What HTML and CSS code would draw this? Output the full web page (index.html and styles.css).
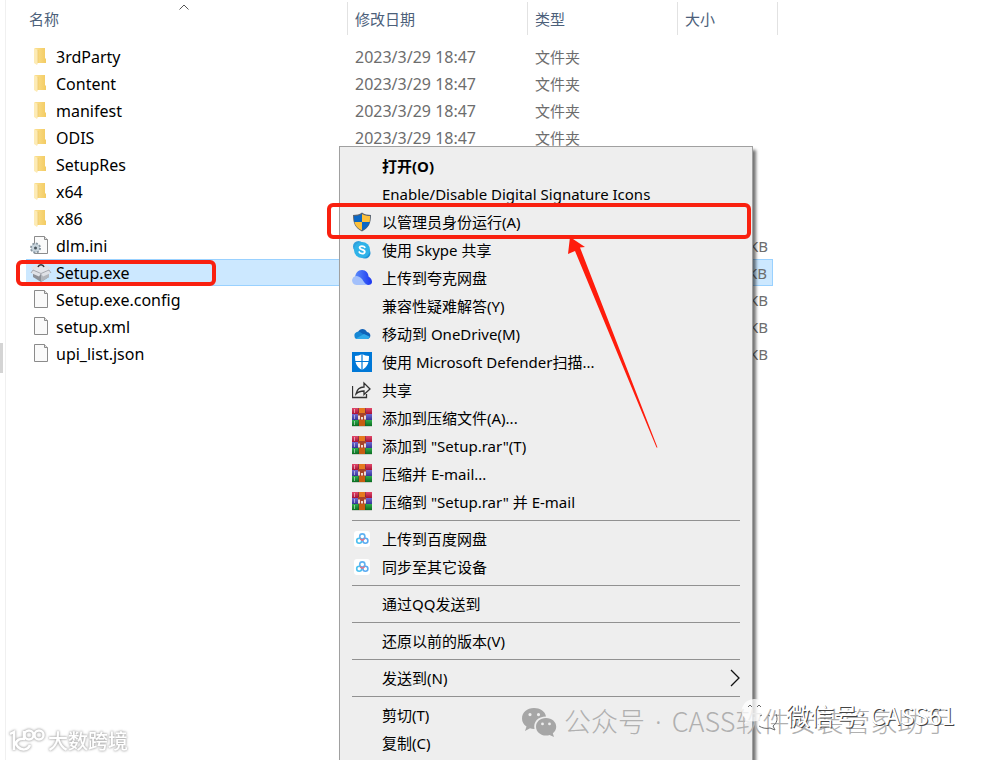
FILE: index.html
```html
<!DOCTYPE html>
<html lang="zh-CN">
<head>
<meta charset="utf-8">
<title>Setup</title>
<link rel="stylesheet" href="styles.css">
</head>
<body>
<svg class="defs" aria-hidden="true">
  <defs>
    <linearGradient id="fold" x1="0" x2="1"><stop offset="0" stop-color="#fbe08f"/><stop offset="1" stop-color="#f3cb62"/></linearGradient>
    <linearGradient id="cloud" x1="0" x2="1"><stop offset="0" stop-color="#5a8bfa"/><stop offset="1" stop-color="#1a35f0"/></linearGradient>
    <linearGradient id="red" x1="0" y1="0" x2="0" y2="1"><stop offset="0" stop-color="#e2486a"/><stop offset="1" stop-color="#a81238"/></linearGradient>
    <linearGradient id="blue" x1="0" y1="0" x2="0" y2="1"><stop offset="0" stop-color="#7069d0"/><stop offset="1" stop-color="#35359a"/></linearGradient>
    <linearGradient id="green" x1="0" y1="0" x2="0" y2="1"><stop offset="0" stop-color="#2fae4c"/><stop offset="1" stop-color="#0b6e22"/></linearGradient>
  </defs>
  <symbol id="folder" viewBox="0 0 22 22">
    <path d="M5 2h10v10l1 1v4H5z" fill="url(#fold)"/>
    <path d="M4 2l3 1.500 1 1v12.500l-1 2-3-2z" fill="#fdebb5"/>
    <path d="M8 4v13" stroke="#e9c467" stroke-width=".7"/>
  </symbol>
  <symbol id="file" viewBox="0 0 22 22">
    <path d="M4.500 1.500h10l3 3v14h-13z" fill="#fafafa" stroke="#8b8b8b"/>
    <path d="M14.500 1.500v3h3" fill="#e4e4e4" stroke="#8b8b8b"/>
  </symbol>
  <symbol id="ini" viewBox="0 0 22 22">
    <path d="M4.500 1.500h10l3 3v14h-13z" fill="#fafafa" stroke="#8b8b8b"/>
    <path d="M14.500 1.500v3h3" fill="#e4e4e4" stroke="#8b8b8b"/>
    <circle cx="5.500" cy="13" r="4.500" fill="#c3cfd8" stroke="#8997a1" stroke-width="2" stroke-dasharray="2 1.500"/>
    <circle cx="5.500" cy="13" r="3.500" fill="#c9d5dd"/>
    <circle cx="5.500" cy="13" r="1.500" fill="#49555e"/>
  </symbol>
  <symbol id="box" viewBox="0 0 22 22">
    <path d="M3 8l8 3 8-3v7l-8 5-8-5z" fill="#8d9097"/>
    <path d="M11 11l8-3v7l-8 5z" fill="#b2b5bb"/>
    <path d="M3 8l8-4 8 4-8 4z" fill="#e3e5ea"/>
    <path d="M3 8L1 5.500 8 2l3 2zM19 8l2-2.500L14 2l-3 2zM3 8l-2 3 8 3.500 2-3zM19 8l2 3-8 3.500-2-3z" fill="#dfe1e6"/>
    <path d="M1 11l2-3 8 3.500L19 8l2 3" fill="none" stroke="#9a9da5" stroke-width=".8"/>
    <path d="M8 5c1-3 5-3 6 0" fill="none" stroke="#343438" stroke-width="1.500"/>
  </symbol>
  <symbol id="shield" viewBox="0 0 20 20">
    <path d="M10 .5c2.500 1.800 5.500 2.500 9 2.500 0 8-2 13-9 16.500C3 16 1 11 1 3 4.500 3 7.500 2.300 10 .5z" fill="#5b6470"/>
    <path d="M10 2v8H2.400C2 8 2 6 2 4c3 0 5.500-.6 8-2z" fill="#0b67c4"/>
    <path d="M10 2v8h7.600c.4-2 .4-4 .4-6-3 0-5.500-.6-8-2z" fill="#fdc03a"/>
    <path d="M10 18.300V10H2.400c.8 4 3.600 6.800 7.600 8.300z" fill="#fdc03a"/>
    <path d="M10 18.300V10h7.600c-.8 4-3.600 6.800-7.600 8.300z" fill="#0b67c4"/>
  </symbol>
  <symbol id="skype" viewBox="0 0 20 20">
    <circle cx="6.500" cy="6.500" r="5.500" fill="#2f9fdc"/><circle cx="13" cy="13" r="5.500" fill="#1f92d6"/>
    <circle cx="10" cy="10" r="8" fill="#2fb2e8"/>
    <path d="M12.800 7.300c-.8-1.500-5.200-1.800-5.200.4 0 2.400 5.200 1.500 5.200 4.100 0 2.500-5 2.100-5.600.2" fill="none" stroke="#fff" stroke-width="1.800" stroke-linecap="round"/>
  </symbol>
  <symbol id="quark" viewBox="0 0 20 20">
    <path d="M3 11C3 5 6 2 10 2c4 0 6.500 3 6.500 6.500C19 10 20 12 20 14c0 2-1.500 3-4 3H5z" fill="url(#cloud)"/>
    <path d="M4.500 17a4.500 4.500 0 1 1 2.500-8.300c4 1.300 4.500 7 9 8.300z" fill="#a3c0fb"/>
  </symbol>
  <symbol id="onedrive" viewBox="0 0 20 20">
    <path d="M6 15a4 4 0 0 1 0-7c2-4 7-4 9 0 5 1 4 7 0 7z" fill="#0f62b8"/>
    <path d="M2.500 12C2 9 5 7 8 8l6 4-9 3c-1.500 0-2.500-1-2.500-3z" fill="#1787d4"/>
    <path d="M4 14.500L12 10l5.500 2.500c.4 1.500-1 2.500-2.500 2.500H6c-1 0-1.500 0-2-.5z" fill="#30a9ea"/>
  </symbol>
  <symbol id="defender" viewBox="0 0 20 20">
    <path d="M0 0h20v20H0z" fill="#0078d7"/>
    <path d="M10 2c2 1.300 4.300 2 7 2 0 7-1.500 11-7 14C4.500 15 3 11 3 4c2.700 0 5-.7 7-2z" fill="#fff"/>
    <path d="M10 2v16M3 9.500h14" stroke="#0078d7" stroke-width="1.200"/>
  </symbol>
  <symbol id="share" viewBox="0 0 20 20">
    <path d="M.5 6v11.500h14V14M4 14C5 9 7.500 7 12 7V3l6 6-6 5.500V11c-4 0-5.500.500-8 3z" fill="none" stroke="#333" stroke-width="1.300"/>
  </symbol>
  <symbol id="rar" viewBox="0 0 20 20">
    <path d="M0 0h20v6H0z" fill="url(#red)"/><path d="M0 6h20v6H0z" fill="url(#blue)"/><path d="M0 12h20v6H0z" fill="url(#green)"/>
    <path d="M0 18.500h20" stroke="#c9d0c9"/>
    <path d="M2.500 1v4M2.500 7v4M2.500 13v4" stroke="#fff" stroke-opacity=".5"/>
    <path d="M6.500 0v18M13.500 0v18" stroke="#333" stroke-opacity=".4"/>
    <path d="M7 0h6v18H7z" fill="#e67a1e"/>
    <path d="M7 12h6v6H7z" fill="#c85c12"/>
    <path d="M6 5h8v7H6z" fill="#a8432a"/>
    <path d="M7 11.500V7.500M13 11.500V7.500M10 11.500V9" stroke="#fff" stroke-width="1.600"/>
  </symbol>
  <symbol id="baidu" viewBox="0 0 20 20">
    <rect x="2" y="2" width="16" height="16" rx="3" fill="#fff"/>
    <g fill="none" stroke-width="1.600"><circle cx="10.300" cy="7.500" r="2.600" stroke="#5fb2f2"/><circle cx="7.200" cy="11.800" r="2.500" stroke="#4cc0f0"/><circle cx="13.400" cy="11.800" r="2.500" stroke="#5aabf2"/></g>
    <path d="M8 9.500l2.300 2 2.300-2" fill="none" stroke="#ee6e80" stroke-width="1.300"/>
  </symbol>
</svg>
<main class="explorer">
  <div class="scroll-thumb"></div>
  <table class="files">
    <colgroup><col class="c-name"><col class="c-date"><col class="c-type"><col class="c-size"><col class="c-gutter"></colgroup>
    <thead>
      <tr>
        <th class="name-head">名称<svg class="sort" viewBox="0 0 10 6" aria-hidden="true"><path d="M.5 5.500L5 1l4.500 4.500"/></svg></th>
        <th>修改日期</th><th>类型</th><th colspan="2">大小</th>
      </tr>
    </thead>
    <tbody>
      <tr><td><span class="file"><svg><use href="#folder"/></svg>3rdParty</span></td><td class="date">2023/3/29 18:47</td><td>文件夹</td><td></td></tr>
      <tr><td><span class="file"><svg><use href="#folder"/></svg>Content</span></td><td class="date">2023/3/29 18:47</td><td>文件夹</td><td></td></tr>
      <tr><td><span class="file"><svg><use href="#folder"/></svg>manifest</span></td><td class="date">2023/3/29 18:47</td><td>文件夹</td><td></td></tr>
      <tr><td><span class="file"><svg><use href="#folder"/></svg>ODIS</span></td><td class="date">2023/3/29 18:47</td><td>文件夹</td><td></td></tr>
      <tr><td><span class="file"><svg><use href="#folder"/></svg>SetupRes</span></td><td></td><td></td><td></td></tr>
      <tr><td><span class="file"><svg><use href="#folder"/></svg>x64</span></td><td></td><td></td><td></td></tr>
      <tr><td><span class="file"><svg><use href="#folder"/></svg>x86</span></td><td></td><td></td><td></td></tr>
      <tr><td><span class="file"><svg><use href="#ini"/></svg>dlm.ini</span></td><td></td><td></td><td class="size">KB</td></tr>
      <tr class="selected"><td><span class="file"><svg><use href="#box"/></svg>Setup.exe</span></td><td></td><td></td><td class="size">KB</td></tr>
      <tr><td><span class="file"><svg><use href="#file"/></svg>Setup.exe.config</span></td><td></td><td></td><td class="size">KB</td></tr>
      <tr><td><span class="file"><svg><use href="#file"/></svg>setup.xml</span></td><td></td><td></td><td class="size">KB</td></tr>
      <tr><td><span class="file"><svg><use href="#file"/></svg>upi_list.json</span></td><td></td><td></td><td class="size">KB</td></tr>
    </tbody>
  </table>

  <div class="menu" role="menu">
    <button class="item default" role="menuitem">打开(O)</button>
    <button class="item" role="menuitem">Enable/Disable Digital Signature Icons</button>
    <button class="item" role="menuitem"><svg><use href="#shield"/></svg>以管理员身份运行(A)</button>
    <button class="item" role="menuitem"><svg><use href="#skype"/></svg>使用 Skype 共享</button>
    <button class="item" role="menuitem"><svg><use href="#quark"/></svg>上传到夸克网盘</button>
    <button class="item" role="menuitem">兼容性疑难解答(Y)</button>
    <button class="item" role="menuitem"><svg><use href="#onedrive"/></svg>移动到 OneDrive(M)</button>
    <button class="item" role="menuitem"><svg><use href="#defender"/></svg>使用 Microsoft Defender扫描...</button>
    <button class="item" role="menuitem"><svg><use href="#share"/></svg>共享</button>
    <button class="item" role="menuitem"><svg><use href="#rar"/></svg>添加到压缩文件(A)...</button>
    <button class="item" role="menuitem"><svg><use href="#rar"/></svg>添加到 "Setup.rar"(T)</button>
    <button class="item" role="menuitem"><svg><use href="#rar"/></svg>压缩并 E-mail...</button>
    <button class="item" role="menuitem"><svg><use href="#rar"/></svg>压缩到 "Setup.rar" 并 E-mail</button>
    <hr>
    <button class="item" role="menuitem"><svg><use href="#baidu"/></svg>上传到百度网盘</button>
    <button class="item" role="menuitem"><svg><use href="#baidu"/></svg>同步至其它设备</button>
    <hr>
    <button class="item" role="menuitem">通过QQ发送到</button>
    <hr>
    <button class="item" role="menuitem">还原以前的版本(V)</button>
    <hr>
    <button class="item submenu" role="menuitem">发送到(N)<svg class="chevron" viewBox="0 0 10 18" aria-hidden="true"><path d="M1 1l8 8-8 8"/></svg></button>
    <hr>
    <button class="item" role="menuitem">剪切(T)</button>
    <button class="item" role="menuitem">复制(C)</button>
  </div>

  <div class="mark mark-file"></div>
  <div class="mark mark-run"></div>
  <svg class="arrow" viewBox="0 0 92 212" aria-hidden="true"><path d="M4 1l15 10-5 .500 77.500 200-1 0L9 15l-7 3z"/></svg>

  <div class="account">
    <svg viewBox="0 0 36 30" aria-hidden="true">
      <path fill-rule="evenodd" d="M13 1C6 1 1 5.500 1 11.500c0 3.500 1.700 6 4.500 8L4 24l5-2.700c1.500.4 3 .7 4.500.6C12 15 17 9.500 25 9.500 24 4 19 1 13 1zM9 6a1.600 1.600 0 1 1 0 3.200A1.600 1.600 0 0 1 9 6zm8.500 0a1.600 1.600 0 1 1 0 3.200 1.600 1.600 0 0 1 0-3.200z"/>
      <path fill-rule="evenodd" d="M25 11c-6 0-10 4-10 8.700 0 5 4.500 8.800 10 8.800 1.300 0 2.500-.2 3.600-.6L33 30l-1.200-3.700c2-1.600 3.400-4 3.400-6.600C35.200 15 31 11 25 11zm-3.500 4.500a1.400 1.400 0 1 1 0 2.800 1.400 1.400 0 0 1 0-2.800zm7 0a1.400 1.400 0 1 1 0 2.800 1.400 1.400 0 0 1 0-2.800z"/>
    </svg>
    <span>公众号<span class="dot"> · </span>CASS软件安装管家助手</span>
  </div>
  <div class="wechat">
    <svg viewBox="0 0 38 34" aria-hidden="true">
      <path class="fill" d="M14 1a13 11.500 0 0 0-8 20l-2 5 6-3c9 2 17-4 17-11C27 5 21 1 14 1z"/>
      <path class="line" d="M8 9l2-2 2 2M17 9l2-2 2 2M36 16c2 5 1 9-3 12l2 4-5-2c-4 1-8 0-11-2M20 18l2-1M28 17l2 1"/>
    </svg>
    <span>微信号: CASS61</span>
  </div>
  <div class="brand">
    <svg viewBox="0 0 36 26" aria-hidden="true"><path d="M1 6l4-2v18M16 11C8 10 5 15 9 19s10 3 12-2M15 3v9"/><circle cx="20" cy="7" r="4.500"/><circle cx="30" cy="7" r="4.500"/></svg>
    <span>大数跨境</span>
  </div>
</main>
</body>
</html>
```
FILE: styles.css
```css
* { box-sizing: border-box; }
body {
  margin: 0;
  background: #fff;
  color: #000;
  font: 15px/20px "Noto Sans", "Noto Sans CJK SC", sans-serif;
}
.defs { position: absolute; width: 0; height: 0; }
.explorer {
  position: relative;
  height: 100vh;
  overflow: hidden;
  padding-left: 26px;
}
.explorer::before {
  content: "";
  position: absolute;
  left: 5px;
  top: 0;
  bottom: 0;
  border-left: 1px solid #f0f0f0;
}
.scroll-thumb {
  position: absolute;
  left: 0;
  top: 343px;
  width: 3px;
  height: 30px;
  background: #d4d4d4;
}

.files { table-layout: fixed; width: 752px; border-collapse: separate; border-spacing: 0; }
.c-name { width: 322px; }
.c-date { width: 180px; }
.c-type { width: 150px; }
.c-size { width: 95px; }
.c-gutter { width: 5px; }
.files th {
  height: 43px;
  padding: 0 7px 5px;
  color: #4c607a;
  font-weight: 400;
  text-align: left;
  background: linear-gradient(#e2e2e2, #e2e2e2) right 2px / 1px 33px no-repeat;
}
.files th.name-head { position: relative; padding-left: 3px; }
.sort {
  position: absolute;
  left: 153px;
  top: 4px;
  width: 10px;
  height: 6px;
  fill: none;
  stroke: #555;
}
.files td { height: 27px; padding: 0 7px; color: #6d6d6d; }
.files td:first-child { padding-left: 4px; color: #000; }
.files td:first-child, .files td.date { font-size: 16px; }
.files td.size { padding-right: 5px; text-align: right; }
.file { display: flex; align-items: center; gap: 4px; }
.file svg { width: 22px; height: 22px; }
.selected td {
  background: #cce8ff;
  border: solid #99d1ff;
  border-width: 1px 0;
}
.selected td:last-child { border-right-width: 1px; }

.menu {
  position: absolute;
  left: 339px;
  top: 146px;
  bottom: 0;
  width: 414px;
  padding: 5px 12px 0;
  background: #eee;
  border: 1px solid #a0a0a0;
  border-bottom: 0;
  box-shadow: 3px 4px 3px rgba(0, 0, 0, .55);
}
.item {
  display: flex;
  align-items: center;
  gap: 10px;
  width: 100%;
  height: 28px;
  padding: 0;
  border: 0;
  background: none;
  color: #000;
  font: inherit;
  text-align: left;
}
.item:not(:has(svg)), .submenu { padding-left: 30px; }
.default { font-weight: 700; }
.item svg { width: 20px; height: 20px; }
.submenu { justify-content: space-between; }
.item .chevron { width: 10px; height: 18px; fill: none; stroke: #111; stroke-width: 1.3; }
.menu hr { margin: 4px 0; border: 0; border-top: 1px solid #919191; }

.mark { position: absolute; border: 4px solid #f9200f; border-radius: 6px; }
.mark-file { left: 16px; top: 260px; width: 200px; height: 26px; }
.mark-run { left: 327px; top: 203px; width: 424px; height: 36px; }
.arrow { position: absolute; left: 566px; top: 236px; width: 92px; height: 212px; fill: #ff1c0c; }

.account {
  position: absolute;
  left: 521px;
  top: 703px;
  display: flex;
  align-items: center;
  gap: 7px;
  color: #b0b0b0;
  font: 27px/36px "Noto Sans CJK SC", sans-serif;
  font-weight: 300;
  white-space: nowrap;
}
.account .dot { margin: 0 3px; font-family: "Noto Sans", sans-serif; }
.account svg { width: 36px; height: 30px; fill: #a6a6a6; }
.wechat {
  position: absolute;
  left: 740px;
  top: 697px;
  display: flex;
  align-items: center;
  gap: 8px;
  color: #fff;
  font: 24px/36px "Noto Sans CJK SC", sans-serif;
  text-shadow: 1px 1px 0 #444;
  white-space: nowrap;
}
.wechat svg { width: 38px; height: 34px; }
.wechat .fill { fill: #fff; fill-opacity: .75; }
.wechat .line { fill: none; stroke: #666; }
.brand {
  position: absolute;
  left: 9px;
  top: 727px;
  display: flex;
  align-items: center;
  gap: 3px;
  color: #fff;
  font: 500 20px/28px "Noto Sans CJK SC", sans-serif;
  filter: drop-shadow(0 0 1px #aaa) drop-shadow(0 0 1px #ccc);
}
.brand svg { width: 36px; height: 26px; fill: none; stroke: #fff; stroke-width: 2.5; }
```
